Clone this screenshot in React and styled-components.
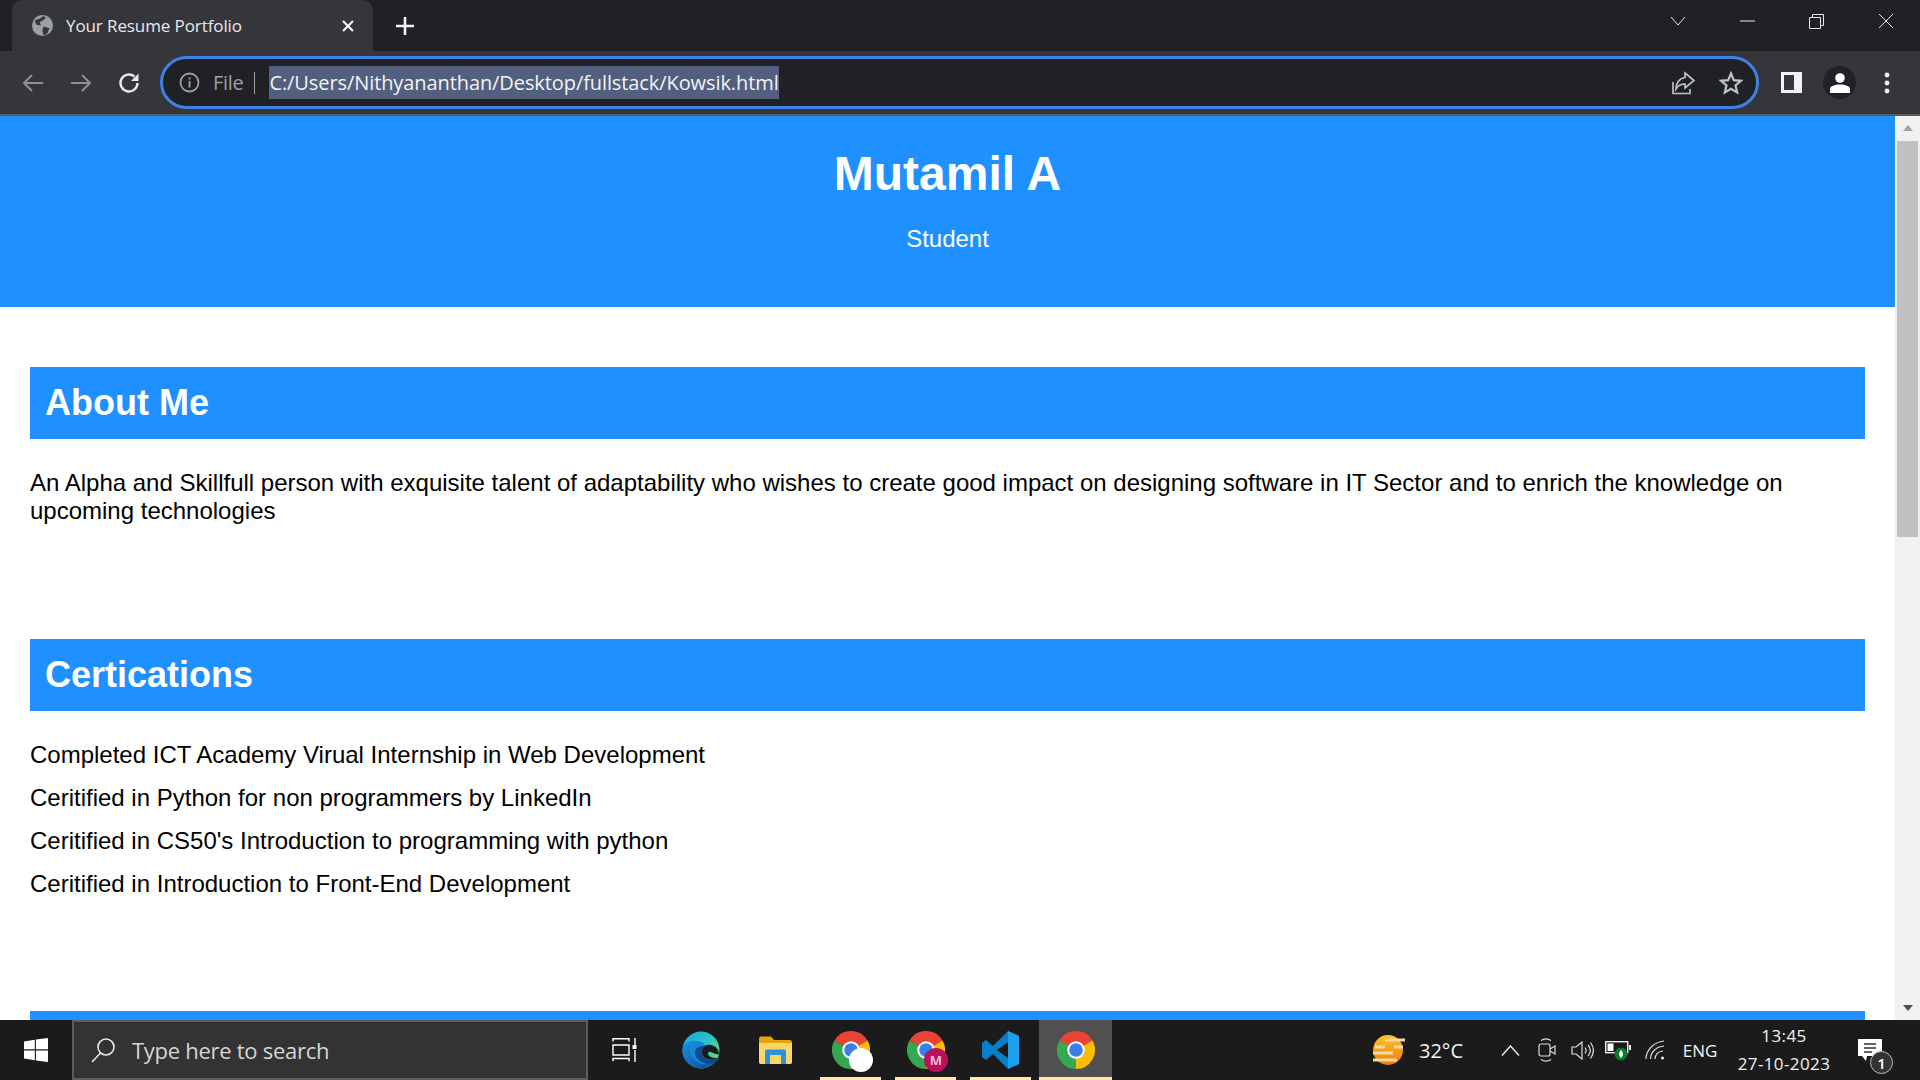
import React from "react";
import styled, { createGlobalStyle } from "styled-components";

const GlobalStyle = createGlobalStyle`
  html, body {
    margin: 0;
    padding: 0;
    width: 1920px;
    height: 1080px;
    overflow: hidden;
    background: #fff;
  }
`;

const Screen = styled.div`
  width: 1920px;
  height: 1080px;
  display: flex;
  flex-direction: column;
  overflow: hidden;
  font-family: "Liberation Sans", Arial, sans-serif;
`;

/* browser chrome */
const TabStrip = styled.div`
  height: 51px;
  flex: none;
  background: #202124;
  display: flex;
  padding-left: 12px;
  font-family: "Open Sans", sans-serif;
`;

const Tab = styled.div`
  width: 361px;
  height: 51px;
  box-sizing: border-box;
  background: #35363a;
  border-radius: 11px 11px 0 0;
  display: flex;
  align-items: center;
  padding: 0 18px 0 20px;
  color: #e8eaed;
  font-size: 17px;
`;

const TabTitle = styled.span`
  flex: 1;
  margin-left: 13px;
  letter-spacing: -0.1px;
`;

const NewTab = styled.div`
  margin-left: 22px;
  height: 51px;
  display: flex;
  align-items: center;
`;

const WindowControls = styled.div`
  margin-left: auto;
  display: flex;
  align-items: flex-start;
  padding: 13px 26px 0 0;
  gap: 54px;
  color: #e8eaed;
`;

const Toolbar = styled.div`
  height: 63px;
  flex: none;
  background: #35363a;
  display: flex;
  align-items: center;
  padding-left: 21px;
  border-bottom: 2px solid #5b5c5f;
  font-family: "Open Sans", sans-serif;
`;

const NavButton = styled.div`
  width: 24px;
  height: 24px;
  margin-right: ${(p) => p.$gap || 24}px;
  display: flex;
  color: ${(p) => (p.$dim ? "#8f9194" : "#e8eaed")};
`;

const AddressBar = styled.div`
  width: 1599px;
  height: 53px;
  margin-left: 3px;
  box-sizing: border-box;
  border: 3px solid #3f81e6;
  border-radius: 27px;
  background: #202124;
  display: flex;
  align-items: center;
  padding: 0 13px 0 16px;
  color: #9aa0a6;
`;

const Scheme = styled.span`
  font-size: 20px;
  margin-left: 13px;
  padding-right: 11px;
  border-right: 1px solid #9aa0a6;
  line-height: 22px;
  letter-spacing: -0.3px;
`;

const Url = styled.span`
  margin-left: 14px;
  height: 33px;
  line-height: 33px;
  background: #525f7f;
  color: #f1f3f4;
  font-size: 20px;
  white-space: nowrap;
  letter-spacing: -0.09px;
`;

const AddressActions = styled.div`
  margin-left: auto;
  display: flex;
  align-items: center;
  gap: 24px;
  color: #bdc1c6;
`;

const ToolbarRight = styled.div`
  display: flex;
  align-items: center;
  margin-left: 22px;
  color: #f1f3f4;
`;

const Avatar = styled.div`
  width: 33px;
  height: 33px;
  margin-left: 21px;
  border-radius: 50%;
  background: #202124;
  display: flex;
  align-items: center;
  justify-content: center;
`;

const MenuDots = styled.svg`
  margin-left: 28px;
`;

/* page */
const Viewport = styled.div`
  flex: 1;
  min-height: 0;
  display: flex;
`;

const Page = styled.main`
  flex: 1;
  min-width: 0;
  overflow: hidden;
  background: #fff;
  color: #000;
`;

const Hero = styled.header`
  height: 191px;
  box-sizing: border-box;
  background: #1e90ff;
  color: #fff;
  text-align: center;
  padding-top: 30px;
`;

const Name = styled.h1`
  margin: 0;
  font-size: 48px;
  line-height: 55px;
  font-weight: 700;
`;

const Role = styled.p`
  margin: 24px 0 0;
  font-size: 24px;
  line-height: 28px;
`;

const Content = styled.div`
  padding: 60px 30px 0;
`;

const Section = styled.section`
  margin-bottom: ${(p) => p.$after || 0}px;
`;

const SectionTitle = styled.h2`
  margin: 0 0 30px;
  height: 72px;
  box-sizing: border-box;
  padding: 15px;
  background: #1e90ff;
  color: #fff;
  font-size: 36px;
  line-height: 41px;
  font-weight: 700;
`;

const Text = styled.p`
  margin: 0;
  font-size: 24px;
  line-height: 28px;
`;

const CertList = styled.div`
  display: flex;
  flex-direction: column;
  gap: 15px;
`;

const Scrollbar = styled.div`
  width: 25px;
  flex: none;
  background: #f1f1f1;
  display: flex;
  flex-direction: column;
  align-items: center;
  justify-content: space-between;
  padding-top: 9px;
  box-sizing: border-box;
`;

const ScrollTop = styled.div`
  display: flex;
  flex-direction: column;
  align-items: center;
  width: 100%;
`;

const Thumb = styled.div`
  width: 21px;
  height: 396px;
  margin-top: 10px;
  background: #c1c1c1;
`;

const ArrowUp = styled.div`
  width: 0;
  height: 0;
  border-left: 5px solid transparent;
  border-right: 5px solid transparent;
  border-bottom: 6px solid #a3a3a3;
`;

const ArrowDown = styled.div`
  width: 0;
  height: 0;
  margin-bottom: 9px;
  border-left: 5px solid transparent;
  border-right: 5px solid transparent;
  border-top: 6px solid #505050;
`;

/* taskbar */
const Taskbar = styled.footer`
  height: 60px;
  flex: none;
  background: #1b1b1b;
  display: flex;
  align-items: stretch;
  font-family: "Open Sans", sans-serif;
  color: #f3f3f3;
`;

const StartButton = styled.div`
  width: 72px;
  display: flex;
  align-items: center;
  justify-content: center;
`;

const SearchBox = styled.div`
  width: 516px;
  box-sizing: border-box;
  border: 2px solid #5c5c5c;
  background: #333;
  display: flex;
  align-items: center;
  padding-left: 16px;
  gap: 16px;
  color: #d6d6d6;
  font-size: 22px;
  letter-spacing: -0.28px;
`;

const TaskView = styled.div`
  width: 73px;
  display: flex;
  align-items: center;
  justify-content: center;
  margin-right: 9px;
`;

const AppSlot = styled.div`
  width: ${(p) => p.$w || 61}px;
  margin-right: ${(p) => (p.$gap === undefined ? 14 : p.$gap)}px;
  box-sizing: border-box;
  display: flex;
  align-items: center;
  justify-content: center;
  position: relative;
  background: ${(p) => (p.$active ? "#505050" : "transparent")};
  border-bottom: 3px solid ${(p) => (p.$open ? "#fde8ae" : "transparent")};
  border-top: 3px solid transparent;
`;

const Badge = styled.div`
  position: absolute;
  left: 29px;
  top: 25px;
  width: 24px;
  height: 24px;
  border-radius: 50%;
  background: ${(p) => p.$bg};
  color: #f3b6cc;
  font-size: 13px;
  font-weight: 700;
  display: flex;
  align-items: center;
  justify-content: center;
`;

const Tray = styled.div`
  margin-left: auto;
  display: flex;
  align-items: center;
  padding-right: 20px;
`;

const TrayItem = styled.div`
  display: flex;
  align-items: center;
  justify-content: center;
  width: ${(p) => p.$w}px;
  margin-left: ${(p) => p.$ml || 0}px;
  font-size: ${(p) => p.$size || 18}px;
`;

const Clock = styled.div`
  width: 108px;
  margin-left: 12px;
  text-align: center;
  font-size: 17px;
  line-height: 28px;
  letter-spacing: 0.4px;
`;

const Notify = styled.div`
  width: 60px;
  margin-left: 2px;
  position: relative;
  display: flex;
  align-items: center;
  justify-content: center;
`;

const NotifyCount = styled.div`
  position: absolute;
  left: 30px;
  top: 12px;
  width: 23px;
  height: 23px;
  box-sizing: border-box;
  border-radius: 50%;
  border: 1px solid #bbb;
  background: #333;
  color: #fff;
  font-size: 15px;
  font-weight: 600;
  display: flex;
  align-items: center;
  justify-content: center;
`;

const ChromeIcon = ({ size = 38 }) => (
  <svg width={size} height={size} viewBox="0 0 48 48">
    <path d="M24 24 L3.2 12 A24 24 0 0 1 44.8 12 Z" fill="#ea4335" />
    <path d="M24 24 L44.8 12 A24 24 0 0 1 24 48 Z" fill="#fbbc04" />
    <path d="M24 24 L24 48 A24 24 0 0 1 3.2 12 Z" fill="#34a853" />
    <circle cx="24" cy="24" r="11" fill="#fff" />
    <circle cx="24" cy="24" r="8.6" fill="#3b7ee8" />
  </svg>
);

const Logo = () => (
  <svg width="24" height="24" viewBox="0 0 24 24" fill="#fff">
    <path d="M0 3.4 10.8 1.8V11.3H0Z" />
    <path d="M11.9 1.6 24 0V11.3H11.9Z" />
    <path d="M0 12.5H10.8V22.2L0 20.6Z" />
    <path d="M11.9 12.5H24V24L11.9 22.4Z" />
  </svg>
);

const certs = [
  "Completed ICT Academy Virual Internship in Web Development",
  "Ceritified in Python for non programmers by LinkedIn",
  "Ceritified in CS50's Introduction to programming with python",
  "Ceritified in Introduction to Front-End Development",
];

export default function App() {
  return (
    <Screen>
      <GlobalStyle />
      <TabStrip>
        <Tab>
          <svg width="21" height="21" viewBox="0 0 24 24">
            <circle cx="12" cy="12" r="12" fill="#9aa0a6" />
            <path d="M3 6 9 4 13 1 16 3 13 6 9 8 10 12 5 11ZM13 13 20 15 17 22 13 23 12 18Z" fill="#35363a" />
          </svg>
          <TabTitle>Your Resume Portfolio</TabTitle>
          <svg width="14" height="14" viewBox="0 0 14 14" stroke="#f1f3f4" strokeWidth="2.2">
            <path d="M2 2 12 12M12 2 2 12" />
          </svg>
        </Tab>
        <NewTab>
          <svg width="20" height="20" viewBox="0 0 20 20" stroke="#f1f3f4" strokeWidth="2.6">
            <path d="M10 1V19M1 10H19" />
          </svg>
        </NewTab>
        <WindowControls>
          <svg width="16" height="16" viewBox="0 0 16 16" fill="none" stroke="currentColor">
            <path d="M1 4 8 12 15 4" />
          </svg>
          <svg width="15" height="16" viewBox="0 0 15 16" stroke="currentColor">
            <path d="M0 8H15" />
          </svg>
          <svg width="15" height="16" viewBox="0 0 15 16" fill="none" stroke="currentColor">
            <path d="M.5 4.5H11.5V15.5H.5ZM3.5 4.5V1.5H14.5V12.5H11.500" />
          </svg>
          <svg width="16" height="16" viewBox="0 0 16 16" stroke="currentColor">
            <path d="M1 1 15 15M15 1 1 15" />
          </svg>
        </WindowControls>
      </TabStrip>

      <Toolbar>
        <NavButton $dim>
          <svg width="24" height="24" viewBox="0 0 24 24" fill="none" stroke="currentColor" strokeWidth="2">
            <path d="M22 12H3M11 4 3 12 11 20" />
          </svg>
        </NavButton>
        <NavButton $dim>
          <svg width="24" height="24" viewBox="0 0 24 24" fill="none" stroke="currentColor" strokeWidth="2">
            <path d="M2 12H21M13 4 21 12 13 20" />
          </svg>
        </NavButton>
        <NavButton $gap={16}>
          <svg width="24" height="24" viewBox="0 0 24 24" fill="none" stroke="currentColor" strokeWidth="2.4">
            <path d="M20.5 12A8.5 8.5 0 1 1 17.5 5.5" />
            <path d="M21.5 2.5V10H14Z" fill="currentColor" stroke="none" />
          </svg>
        </NavButton>
        <AddressBar>
          <svg width="21" height="21" viewBox="0 0 21 21" fill="none" stroke="currentColor" strokeWidth="1.8">
            <circle cx="10.5" cy="10.5" r="9" />
            <path d="M10.5 9V15.5M10.5 5.5V7.5" />
          </svg>
          <Scheme>File</Scheme>
          <Url>C:/Users/Nithyananthan/Desktop/fullstack/Kowsik.html</Url>
          <AddressActions>
            <svg width="24" height="24" viewBox="0 0 24 24" fill="none" stroke="currentColor" strokeWidth="1.7">
              <path d="M2 11V22.5H19V18" />
              <path d="M14 2 23 9.5 14 17V13C10 13 7 14.5 5 18 5 12 8.5 7 14 6.5Z" />
            </svg>
            <svg width="24" height="24" viewBox="0 0 24 24" fill="none" stroke="currentColor" strokeWidth="2.2">
              <path d="M12 2.5 14.8 9.2 22 9.8 16.5 14.5 18.2 21.5 12 17.8 5.8 21.5 7.5 14.5 2 9.8 9.2 9.2Z" />
            </svg>
          </AddressActions>
        </AddressBar>
        <ToolbarRight>
          <svg width="21" height="21" viewBox="0 0 21 21">
            <rect width="21" height="21" fill="currentColor" />
            <rect x="3" y="3" width="10" height="15" fill="#35363a" />
          </svg>
          <Avatar>
            <svg width="20" height="20" viewBox="0 0 20 20" fill="#fff">
              <circle cx="10" cy="5" r="4.8" />
              <path d="M0 20V16C0 13 5 11.5 10 11.5S20 13 20 16V20Z" />
            </svg>
          </Avatar>
          <MenuDots width="6" height="22" viewBox="0 0 6 22" fill="currentColor">
            <circle cx="3" cy="3" r="2.4" />
            <circle cx="3" cy="11" r="2.4" />
            <circle cx="3" cy="19" r="2.4" />
          </MenuDots>
        </ToolbarRight>
      </Toolbar>

      <Viewport>
        <Page>
          <Hero>
            <Name>Mutamil A</Name>
            <Role>Student</Role>
          </Hero>
          <Content>
            <Section $after={114}>
              <SectionTitle>About Me</SectionTitle>
              <Text>
                An Alpha and Skillfull person with exquisite talent of adaptability who wishes to create good impact on
                designing software in IT Sector and to enrich the knowledge on upcoming technologies
              </Text>
            </Section>
            <Section $after={113}>
              <SectionTitle>Certications</SectionTitle>
              <CertList>
                {certs.map((c) => (
                  <Text key={c}>{c}</Text>
                ))}
              </CertList>
            </Section>
            <Section>
              <SectionTitle />
            </Section>
          </Content>
        </Page>
        <Scrollbar>
          <ScrollTop>
            <ArrowUp />
            <Thumb />
          </ScrollTop>
          <ArrowDown />
        </Scrollbar>
      </Viewport>

      <Taskbar>
        <StartButton>
          <Logo />
        </StartButton>
        <SearchBox>
          <svg width="26" height="26" viewBox="0 0 26 26" fill="none" stroke="#e8e8e8" strokeWidth="1.6">
            <circle cx="16" cy="10" r="8" />
            <path d="M10.5 16 2 25" />
          </svg>
          Type here to search
        </SearchBox>
        <TaskView>
          <svg width="25" height="24" viewBox="0 0 25 24" fill="none" stroke="#fff" strokeWidth="1.4">
            <path d="M1 3.5V.7H17V3.5M1 7H17V17H1ZM1 23.3V20.5H17V23.3M23 0V7M23 12V24" />
            <rect x="20.5" y="7" width="4" height="4" fill="#fff" stroke="none" />
          </svg>
        </TaskView>
        <AppSlot>
          <svg width="38" height="38" viewBox="0 0 38 38">
            <defs>
              <linearGradient id="edgeGreen" x1="0" y1="0" x2="1" y2="0.8">
                <stop offset="0" stopColor="#1aa5e0" />
                <stop offset="0.55" stopColor="#2cc3c8" />
                <stop offset="1" stopColor="#6bdc5e" />
              </linearGradient>
              <linearGradient id="edgeBlue" x1="0" y1="0" x2="0.6" y2="1">
                <stop offset="0" stopColor="#1b8fe0" />
                <stop offset="1" stopColor="#0c5cab" />
              </linearGradient>
            </defs>
            <circle cx="19" cy="19" r="18.5" fill="url(#edgeGreen)" />
            <path d="M.6 17C3 11 9 9 15 10 9 12 7 18 9.500 24 12.500 31 22 35 32 31.500 28 36 23 38 18 37.500 7 36.500-1 27 .6 17Z" fill="url(#edgeBlue)" />
            <path d="M15 10C9 12 7 18 9.500 24 12.500 31 22 35 32 31.500 34 30 36 28 37 26 31 30 24 29 21 25 19 22 20 17 24 15 21 11 18 10 15 10Z" fill="#1585d6" />
            <path d="M37 23C37 17 31 13 25.500 14 20 15 18.500 21 21 25 24 29 31 30 36 27 30 27.500 26 25 26 22.500 26 21 27.500 20.500 29 21 32 22 35 24 37 23Z" fill="#1b1b1b" />
            <path d="M13 21C13 28 21 35 31 32.500 34 31.500 36 29.500 37 26.500 31 30.500 24 29.500 21 25 19 22 20 17.500 23 15 17.500 15 13 17 13 21Z" fill="#0f4c8f" />
          </svg>
        </AppSlot>
        <AppSlot>
          <svg width="33" height="28" viewBox="0 0 33 28">
            <path d="M0 3C0 1.500 1 .5 2 .5H12L15 4H31C32 4 33 5 33 6V26C33 27 32 28 31 28H2C1 28 0 27 0 26Z" fill="#e5a50a" />
            <path d="M0 7H33V26C33 27 32 28 31 28H2C1 28 0 27 0 26Z" fill="#fcd669" />
            <path d="M6 28V15C6 14 7 13.500 8 13.500H25C26 13.500 27 14 27 15V28H22V19H11V28Z" fill="#2d90d9" />
          </svg>
        </AppSlot>
        <AppSlot $open>
          <ChromeIcon />
          <Badge $bg="#fff" />
        </AppSlot>
        <AppSlot $open>
          <ChromeIcon />
          <Badge $bg="#b8125c">M</Badge>
        </AppSlot>
        <AppSlot $open $gap={8}>
          <svg width="37" height="38" viewBox="0 0 37 38">
            <path d="M26 0 37 5V33L26 38 11 23 4 29 0 26V12L4 9 11 15ZM26 11 15 19 26 27Z" fill="#0a7fc9" />
            <path d="M26 0 37 5V33L26 38Z" fill="#1fa0ef" />
          </svg>
        </AppSlot>
        <AppSlot $open $active $w={73} $gap={0}>
          <ChromeIcon />
        </AppSlot>
        <Tray>
          <TrayItem $w={36}>
            <svg width="34" height="32" viewBox="0 0 34 32">
              <defs>
                <linearGradient id="sun" x1="0" y1="0" x2="0" y2="1">
                  <stop offset="0" stopColor="#fdc32b" />
                  <stop offset="1" stopColor="#ee7b06" />
                </linearGradient>
              </defs>
              <circle cx="17" cy="16" r="15" fill="url(#sun)" />
              <path d="M14 6H34M4 13H14M23 13H32M2 19H22M2 26H26" stroke="#f3d9a4" strokeWidth="2.8" />
            </svg>
          </TrayItem>
          <TrayItem $w={46} $size={20} $ml={12}>32°C</TrayItem>
          <TrayItem $w={44} $ml={24}>
            <svg width="19" height="11" viewBox="0 0 19 11" fill="none" stroke="#eee" strokeWidth="1.4">
              <path d="M1 10.500 9.500 1 18 10.500" />
            </svg>
          </TrayItem>
          <TrayItem $w={30}>
            <svg width="18" height="24" viewBox="0 0 18 24" fill="none" stroke="#ddd" strokeWidth="1.2">
              <rect x="1" y="6" width="11" height="12" rx="2" />
              <path d="M12 11 17 8V16L12 13M3 2.500C6 .5 10 .5 13 2.500M3 21.500C6 23.500 10 23.500 13 21.500" />
            </svg>
          </TrayItem>
          <TrayItem $w={40}>
            <svg width="23" height="19" viewBox="0 0 23 19" fill="none" stroke="#ddd" strokeWidth="1.2">
              <path d="M1 6H5L11 1V18L5 13H1Z" />
              <path d="M14 6.500C15.500 8.500 15.500 10.500 14 12.500M17 4C20 7.500 20 11.500 17 15M19.500 1.500C23.500 7 23.500 12 19.500 17.500" />
            </svg>
          </TrayItem>
          <TrayItem $w={32}>
            <svg width="26" height="22" viewBox="0 0 26 22">
              <rect x=".7" y="2.700" width="22" height="11" fill="none" stroke="#eee" strokeWidth="1.4" />
              <rect x="2.500" y="4.500" width="6" height="7.500" fill="#fff" />
              <rect x="24" y="6" width="2" height="5" fill="#eee" />
              <circle cx="16" cy="15" r="6.500" fill="#0a7d2c" />
              <path d="M16 11C18.500 13 18.500 17 16 19 13.500 17 13.500 13 16 11Z" fill="#fff" />
            </svg>
          </TrayItem>
          <TrayItem $w={42}>
            <svg width="20" height="20" viewBox="0 0 20 20" fill="none" stroke="#ddd" strokeWidth="1.2">
              <path d="M1 19C1 10 9 2 19 1M5.500 19C5.500 12.500 11 6.500 19 6M10 19C10 15 13 11.500 18 11" />
              <circle cx="17.500" cy="18" r="1.500" fill="#eee" stroke="none" />
            </svg>
          </TrayItem>
          <TrayItem $w={36} $size={17} $ml={6}>ENG</TrayItem>
          <Clock>
            13:45
            <br />
            27-10-2023
          </Clock>
          <Notify>
            <svg width="24" height="22" viewBox="0 0 24 22">
              <path d="M0 0H24V17H9L8 22 4 17H0Z" fill="#fff" />
              <path d="M6 5H18M6 9H18M6 13H14" stroke="#333" strokeWidth="1.4" />
            </svg>
            <NotifyCount>1</NotifyCount>
          </Notify>
        </Tray>
      </Taskbar>
    </Screen>
  );
}
